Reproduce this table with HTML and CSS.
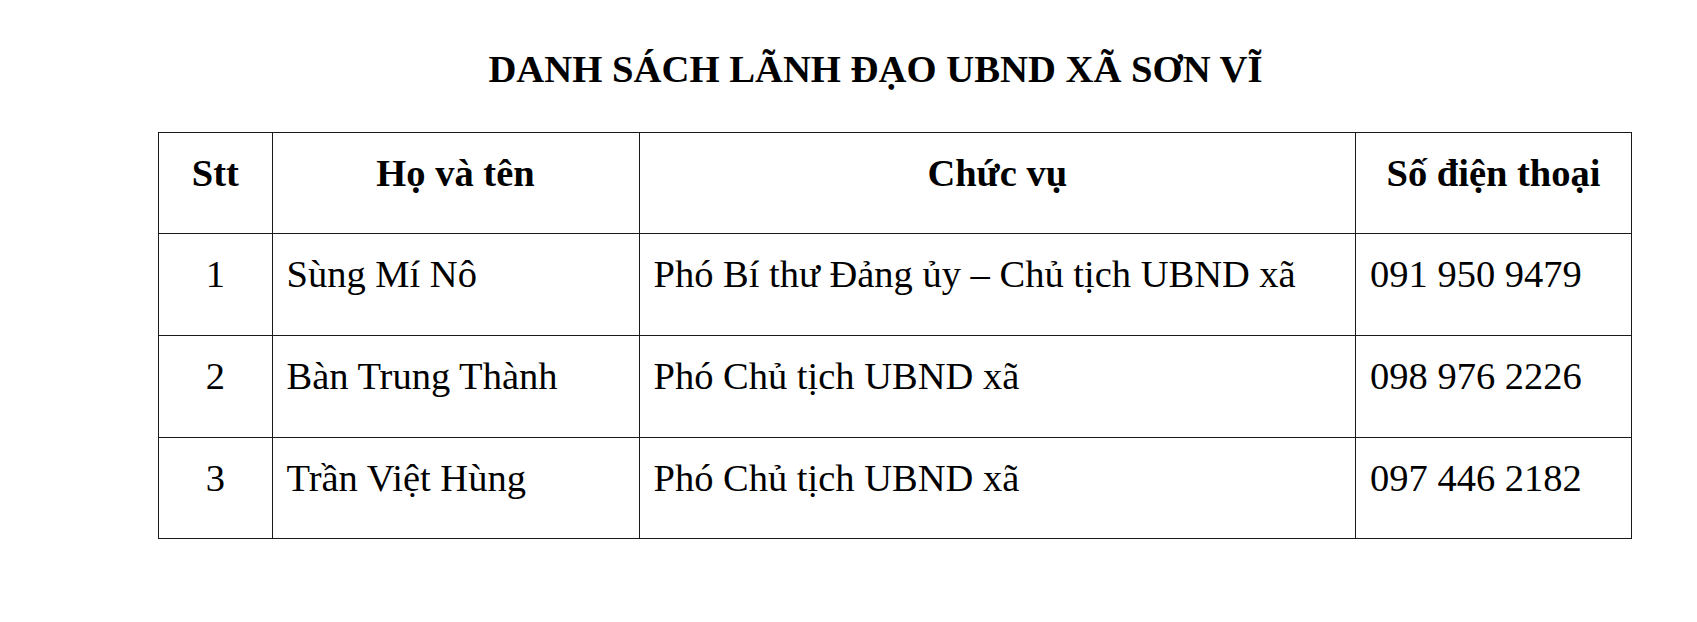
FILE: index.html
```html
<!DOCTYPE html>
<html lang="vi">
<head>
<meta charset="utf-8">
<title>Danh sách lãnh đạo UBND xã Sơn Vĩ</title>
<link rel="stylesheet" href="styles.css">
</head>
<body>
<div class="page">
  <h1 class="title">DANH SÁCH LÃNH ĐẠO UBND XÃ SƠN VĨ</h1>
  <table class="leaders">
    <colgroup>
      <col class="c-stt">
      <col class="c-name">
      <col class="c-role">
      <col class="c-phone">
    </colgroup>
    <thead>
      <tr>
        <th>Stt</th>
        <th>Họ và tên</th>
        <th>Chức vụ</th>
        <th>Số điện thoại</th>
      </tr>
    </thead>
    <tbody>
      <tr>
        <td class="num">1</td>
        <td>Sùng Mí Nô</td>
        <td>Phó Bí thư Đảng ủy – Chủ tịch UBND xã</td>
        <td>091 950 9479</td>
      </tr>
      <tr>
        <td class="num">2</td>
        <td>Bàn Trung Thành</td>
        <td>Phó Chủ tịch UBND xã</td>
        <td>098 976 2226</td>
      </tr>
      <tr>
        <td class="num">3</td>
        <td>Trần Việt Hùng</td>
        <td>Phó Chủ tịch UBND xã</td>
        <td>097 446 2182</td>
      </tr>
    </tbody>
  </table>
</div>
</body>
</html>
```
FILE: styles.css
```css
html, body {
  margin: 0;
  padding: 0;
  background: #ffffff;
}

body {
  font-family: "Liberation Serif", "Times New Roman", serif;
  color: #000000;
}

.page {
  padding: 47px 67px 0 158px;
}

.title {
  margin: 0 0 40px 0;
  padding-right: 37px;
  font-size: 38.7px;
  line-height: 1.15;
  font-weight: bold;
  text-align: center;
}

.leaders {
  border-collapse: collapse;
  table-layout: fixed;
  width: 1473px;
  font-size: 38.5px;
  line-height: 1.15;
}

.c-stt { width: 113.5px; }
.c-name { width: 367px; }
.c-role { width: 716.5px; }
.c-phone { width: 276px; }

.leaders th,
.leaders td {
  border: 1px solid #1a1a1a;
  height: 101.7px;
  box-sizing: border-box;
  padding: 18px 14px 20px 14px;
  vertical-align: top;
  white-space: nowrap;
}

.leaders th {
  font-weight: bold;
  text-align: center;
}

.leaders td {
  font-weight: normal;
  text-align: left;
}

.leaders td.num {
  text-align: center;
}
```
